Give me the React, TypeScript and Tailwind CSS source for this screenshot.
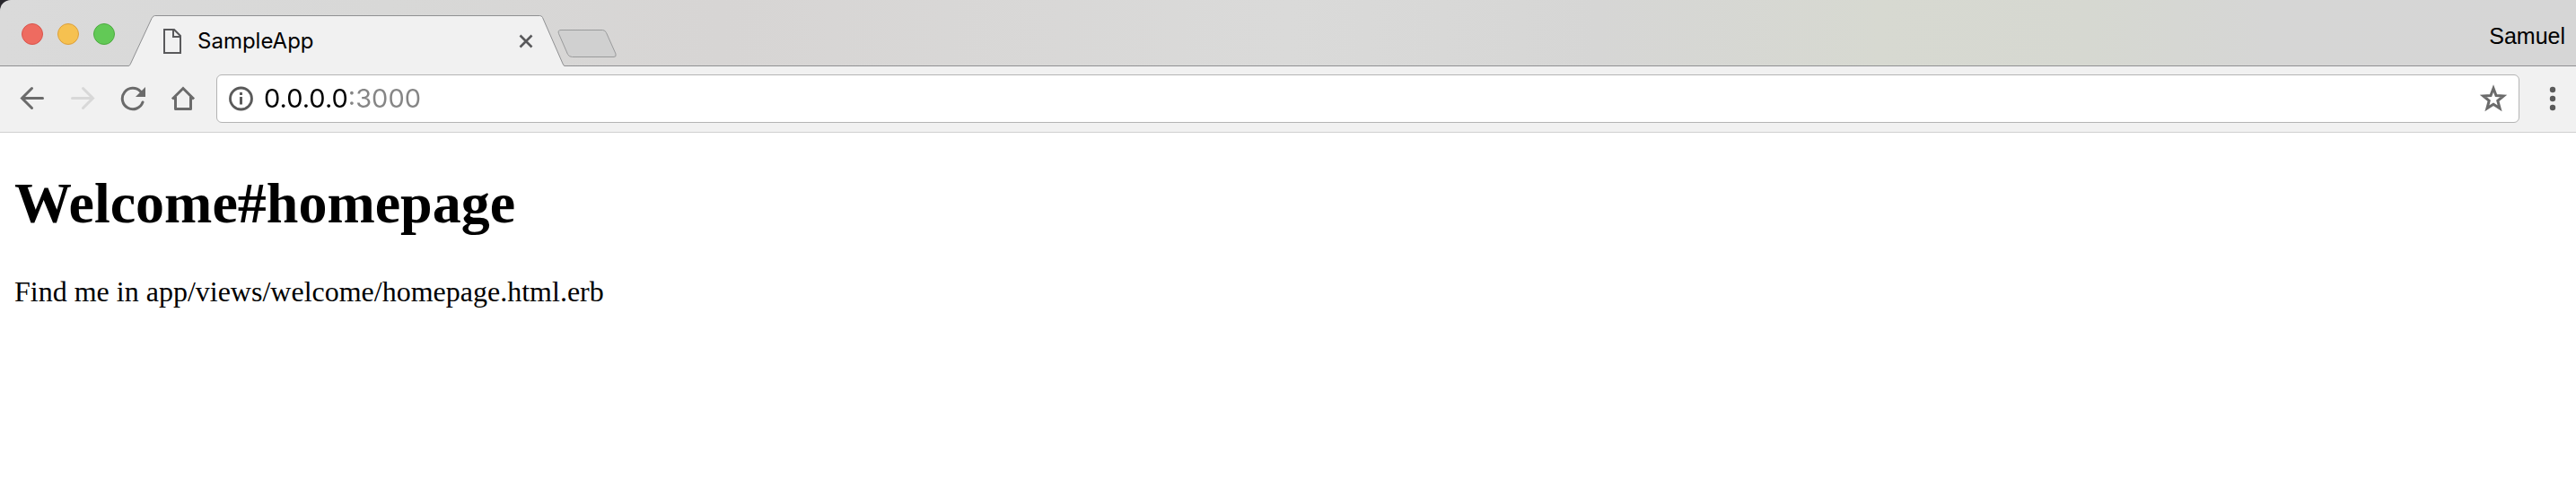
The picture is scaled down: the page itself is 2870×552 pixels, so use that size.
import React from 'react';

const iconButton = 'flex h-[54px] w-14 shrink-0 items-center justify-center';

function Tab() {
  return (
    <div className="relative flex h-[57px] w-[486px] shrink-0 items-center pl-[39px] pr-[31px] pt-px">
      <svg className="absolute inset-0 h-full w-full" viewBox="0 0 486 57" aria-hidden="true">
        <path
          d="M0 57V56.5C1.500 56.500 2 55 2.500 54L26 3.500Q27.500 .5 29.500 .5H458.500Q460.500 .5 461.500 2.500L484 54Q485 56.500 486 56.500V57Z"
          fill="#f1f1f1"
        />
        <path
          d="M0 56.500C1.500 56.500 2 55 2.500 54L26 3.500Q27.500 .5 29.500 .5H458.500Q460.500 .5 461.500 2.500L484 54Q485 56.500 486 56.500"
          fill="none"
          stroke="#8f9092"
        />
      </svg>
      <svg className="relative h-7 w-5" viewBox="0 0 20 28" fill="none" stroke="#59595b" strokeWidth="2" aria-hidden="true">
        <path d="M1 1H12L19 8V27H1Z" />
        <path d="M11 1V9H19" />
      </svg>
      <span className="relative ml-[18px] grow text-2xl leading-8 text-black">SampleApp</span>
      <button type="button" aria-label="Close tab" className="relative flex h-6 w-6 items-center justify-center">
        <svg className="h-4 w-4" viewBox="0 0 16 16" fill="none" stroke="#59595b" strokeWidth="2.600" aria-hidden="true">
          <path d="M1.500 1.500L14.500 14.500M14.500 1.500L1.500 14.500" />
        </svg>
      </button>
    </div>
  );
}

export default function App() {
  return (
    <div className="min-h-screen bg-white font-[Inter,'Liberation_Sans',sans-serif] text-black">
      <div className="bg-[#27262b]">
        <header className="flex h-[74px] items-end rounded-tl-xl bg-[linear-gradient(90deg,#dadada,#d8d8d7_15%,#d7d5d4_28%,#dadad9_50%,#d6d6d5_62%,#d7d9d1_73%,#d6d8d1_81%,#d6d6d5_88%,#d6d6d6)]">
          <div className="flex h-[74px] w-[143px] shrink-0 gap-4 border-b border-[#8f9092] pl-6 pt-[26px]">
            <button type="button" aria-label="Close window" className="h-6 w-6 rounded-full border border-[#d9544c] bg-[#ee6b60]" />
            <button type="button" aria-label="Minimize window" className="h-6 w-6 rounded-full border border-[#dca03c] bg-[#f6c150]" />
            <button type="button" aria-label="Zoom window" className="h-6 w-6 rounded-full border border-[#4dab40] bg-[#62c956]" />
          </div>
          <Tab />
          <div className="flex h-[74px] grow items-start justify-between border-b border-[#8f9092]">
            <button type="button" aria-label="New tab" className="mt-8 -ml-2">
              <svg className="h-8 w-[66px]" viewBox="0 0 66 32" aria-hidden="true">
                <path
                  d="M4 1.500H50.500Q53 1.500 54.500 4.500L65 28Q66 31.500 63 31.500H16.500Q13 31.500 11.500 28.500L1.500 5.500Q0 1.500 4 1.500Z"
                  fill="#d0d0d0"
                  stroke="#999a9b"
                />
              </svg>
            </button>
            <button type="button" className="mr-3 mt-6 font-['Liberation_Sans',sans-serif] text-[25px] leading-8">
              Samuel
            </button>
          </div>
        </header>
      </div>
      <nav className="flex items-center border-b border-[#d0d0d0] bg-[#f1f1f1] pb-[10px] pl-2 pt-[9px]">
        <button type="button" aria-label="Back" className={iconButton}>
          <svg className="h-7 w-7" viewBox="0 0 28 28" fill="none" stroke="#6b6b6b" strokeWidth="3" strokeLinecap="round" aria-hidden="true">
            <path d="M25.500 13.500H2.500M13.500 2.500L2.500 13.500L13.500 24.500" />
          </svg>
        </button>
        <button type="button" aria-label="Forward" disabled className={iconButton}>
          <svg className="h-7 w-7" viewBox="0 0 28 28" fill="none" stroke="#d8d8d8" strokeWidth="3" strokeLinecap="round" aria-hidden="true">
            <path d="M2.500 13.500H25.500M14.500 2.500L25.500 13.500L14.500 24.500" />
          </svg>
        </button>
        <button type="button" aria-label="Reload" className={iconButton}>
          <svg className="h-7 w-7" viewBox="0 0 28 28" fill="none" aria-hidden="true">
            <path d="M25 18A11.700 11.700 0 1 1 22.500 6" stroke="#6b6b6b" strokeWidth="3" strokeLinecap="round" />
            <path d="M28 1V12H17Z" fill="#6b6b6b" />
          </svg>
        </button>
        <button type="button" aria-label="Home" className={iconButton}>
          <svg className="h-7 w-7" viewBox="0 0 28 28" fill="none" stroke="#6b6b6b" strokeWidth="3" aria-hidden="true">
            <path d="M5.500 12V25.500H22.500V12" strokeLinejoin="round" />
            <path d="M2 14.500L14 2.500L26 14.500" />
          </svg>
        </button>
        <div className="ml-[9px] flex h-[54px] min-w-0 grow items-center rounded-md border border-[#b4b4b4] bg-white pl-[13px] pr-3">
          <button type="button" aria-label="View site information" className="shrink-0">
            <svg className="h-7 w-7" viewBox="0 0 28 28" fill="none" aria-hidden="true">
              <circle cx="13.500" cy="14" r="12" stroke="#5a5a5a" strokeWidth="2.800" />
              <path d="M12 7H15V10H12ZM12 12H15V20.500H12Z" fill="#5a5a5a" />
            </svg>
          </button>
          <input
            type="text"
            aria-label="Address"
            defaultValue="0.0.0.0:3000"
            className="ml-[11px] h-10 min-w-0 grow bg-[linear-gradient(90deg,#000_96px,#858585_96px)] bg-clip-text text-[29px] leading-10 text-transparent outline-none"
          />
          <button type="button" aria-label="Bookmark this page" className="shrink-0">
            <svg className="h-8 w-8" viewBox="0 0 32 32" fill="none" stroke="#6b6b6b" strokeWidth="3" aria-hidden="true">
              <path d="M16 4.500L19 12.600L27.300 13L20.800 18.400L23.100 26.800L16 22.200L8.900 26.800L11.200 18.400L4.700 13L13 12.600Z" />
            </svg>
          </button>
        </div>
        <button type="button" aria-label="Menu" className="ml-[11px] flex h-[54px] w-[52px] shrink-0 items-center justify-center">
          <svg className="h-7 w-2" viewBox="0 0 8 28" fill="#5a5a5a" aria-hidden="true">
            <circle cx="4" cy="4" r="3.200" />
            <circle cx="4" cy="14" r="3.200" />
            <circle cx="4" cy="24" r="3.200" />
          </svg>
        </button>
      </nav>
      <main className="px-4 pt-[42px] font-['Liberation_Serif',serif]">
        <h1 className="text-[64px] font-bold leading-[74px]">Welcome#homepage</h1>
        <p className="mt-[43px] text-[32px] leading-9">Find me in app/views/welcome/homepage.html.erb</p>
      </main>
    </div>
  );
}
